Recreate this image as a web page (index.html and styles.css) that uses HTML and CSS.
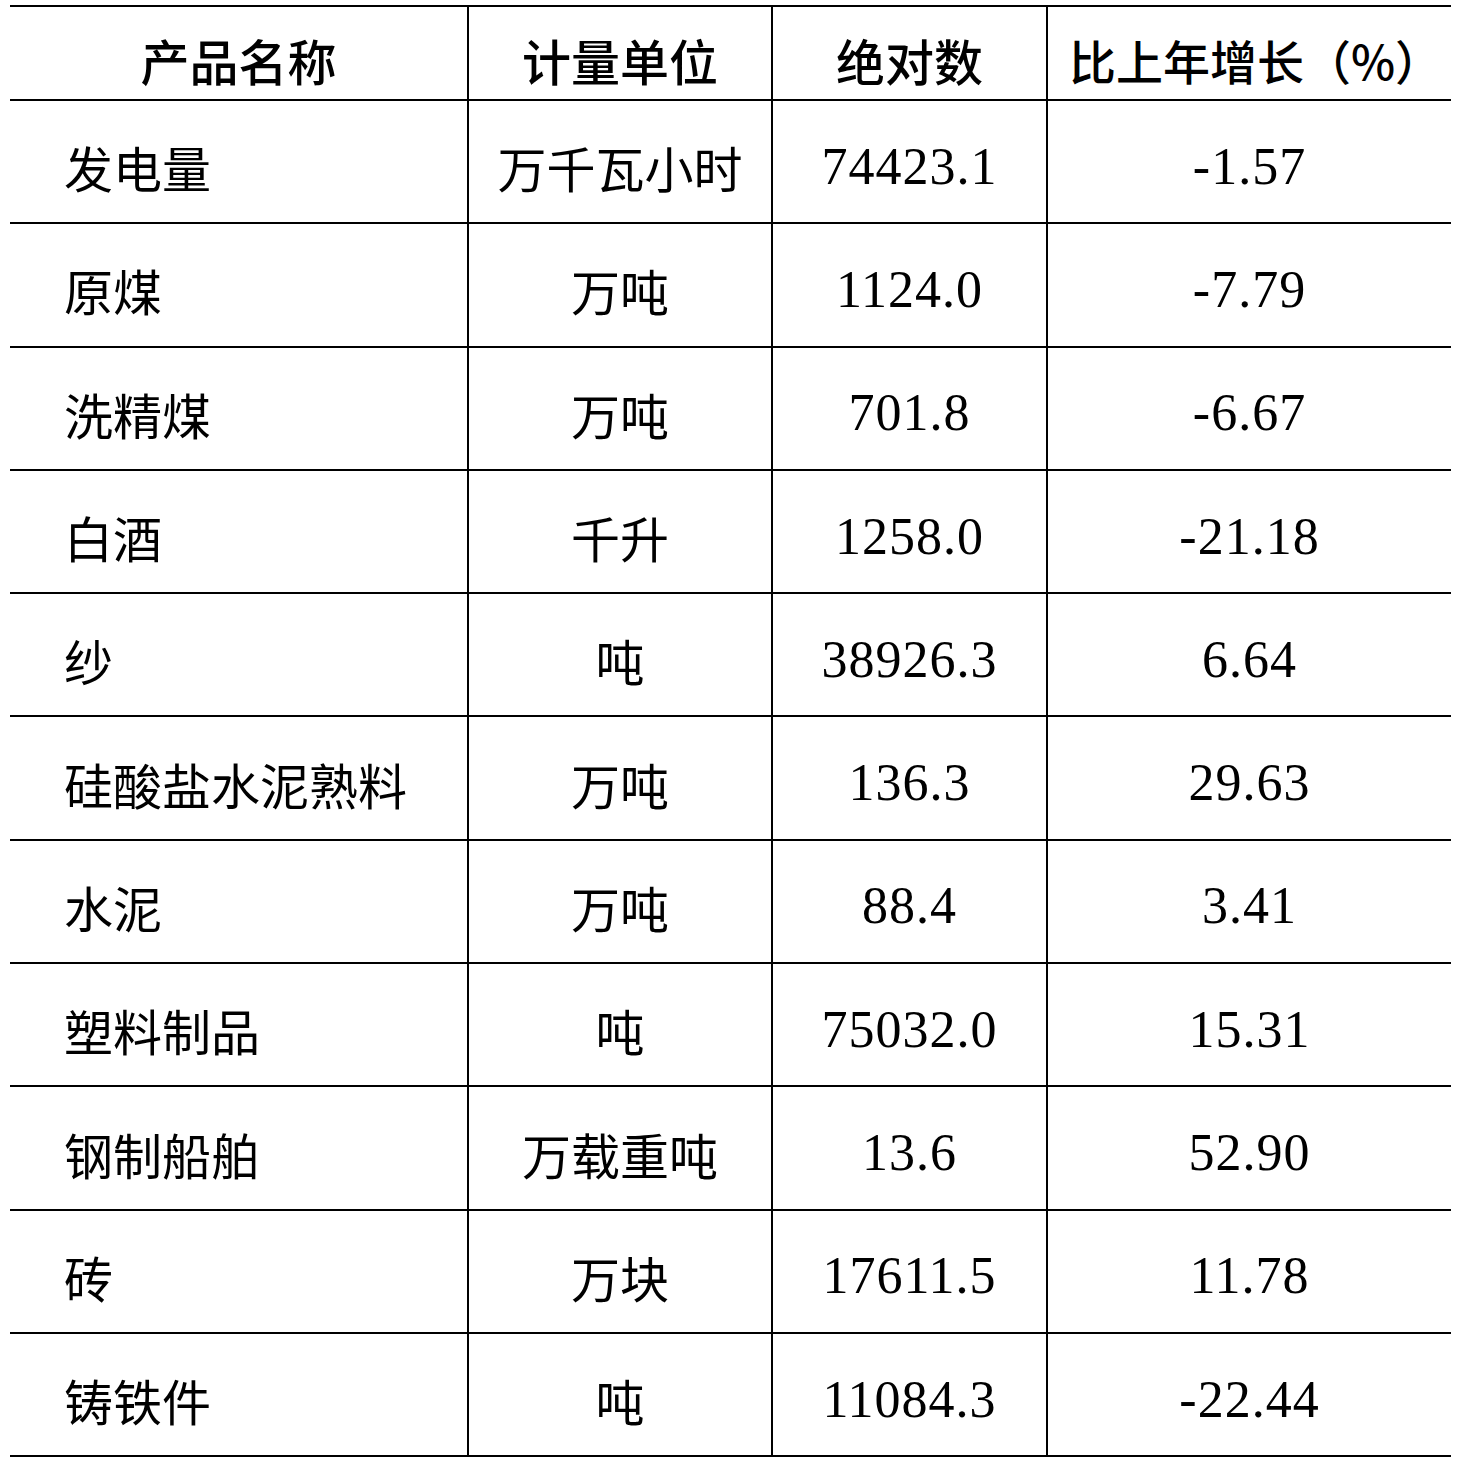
FILE: index.html
```html
<!DOCTYPE html>
<html lang="zh-CN">
<head>
<meta charset="utf-8">
<title>主要工业产品产量</title>
<link rel="stylesheet" href="styles.css">
</head>
<body>
<table class="stats">
  <colgroup>
    <col class="c-name">
    <col class="c-unit">
    <col class="c-abs">
    <col class="c-growth">
  </colgroup>
  <thead>
    <tr class="head-row">
      <th>产品名称</th>
      <th>计量单位</th>
      <th>绝对数</th>
      <th class="growth-head">比上年增长（%）</th>
    </tr>
  </thead>
  <tbody>
    <tr><td class="name">发电量</td><td class="unit">万千瓦小时</td><td class="num">74423.1</td><td class="num">-1.57</td></tr>
    <tr><td class="name">原煤</td><td class="unit">万吨</td><td class="num">1124.0</td><td class="num">-7.79</td></tr>
    <tr><td class="name">洗精煤</td><td class="unit">万吨</td><td class="num">701.8</td><td class="num">-6.67</td></tr>
    <tr><td class="name">白酒</td><td class="unit">千升</td><td class="num">1258.0</td><td class="num">-21.18</td></tr>
    <tr><td class="name">纱</td><td class="unit">吨</td><td class="num">38926.3</td><td class="num">6.64</td></tr>
    <tr><td class="name">硅酸盐水泥熟料</td><td class="unit">万吨</td><td class="num">136.3</td><td class="num">29.63</td></tr>
    <tr><td class="name">水泥</td><td class="unit">万吨</td><td class="num">88.4</td><td class="num">3.41</td></tr>
    <tr><td class="name">塑料制品</td><td class="unit">吨</td><td class="num">75032.0</td><td class="num">15.31</td></tr>
    <tr><td class="name">钢制船舶</td><td class="unit">万载重吨</td><td class="num">13.6</td><td class="num">52.90</td></tr>
    <tr><td class="name">砖</td><td class="unit">万块</td><td class="num">17611.5</td><td class="num">11.78</td></tr>
    <tr><td class="name">铸铁件</td><td class="unit">吨</td><td class="num">11084.3</td><td class="num">-22.44</td></tr>
  </tbody>
</table>
</body>
</html>
```

FILE: styles.css
```css
html, body {
  margin: 0;
  padding: 0;
  background: #ffffff;
}

body {
  color: #000000;
  font-family: "Noto Sans CJK SC", "Noto Sans", sans-serif;
}

.stats {
  margin: 5px 0 0 10px;
  width: 1441px;
  border-collapse: collapse;
  table-layout: fixed;
}

.c-name { width: 458px; }
.c-unit { width: 304px; }
.c-abs { width: 275px; }
.c-growth { width: 404px; }

.stats th,
.stats td {
  border-top: 2px solid #000;
  border-bottom: 2px solid #000;
  border-left: 2px solid #000;
  padding: 0;
  text-align: center;
  vertical-align: middle;
  white-space: nowrap;
}

.stats th:first-child,
.stats td:first-child {
  border-left: none;
}

.head-row th {
  height: 94px;
  padding-top: 12px;
  box-sizing: border-box;
  font-family: "Noto Sans CJK SC", sans-serif;
  font-weight: 500;
  font-size: 49px;
  line-height: 1;
}

.head-row th.growth-head {
  font-size: 47px;
  padding-left: 12px;
}

.stats tbody td {
  height: 123.3px;
  padding-top: 10px;
  box-sizing: border-box;
  font-size: 49px;
  line-height: 1;
}

.stats td.name {
  text-align: left;
  padding-left: 54px;
  font-family: "Noto Sans CJK SC", serif;
  font-weight: 400;
}

.stats td.unit {
  font-family: "Noto Sans CJK SC", serif;
  font-weight: 400;
}

.stats td.num {
  font-family: "Liberation Serif", "DejaVu Serif", serif;
  font-size: 52px;
  font-variant-numeric: tabular-nums;
  letter-spacing: 1px;
}
```
